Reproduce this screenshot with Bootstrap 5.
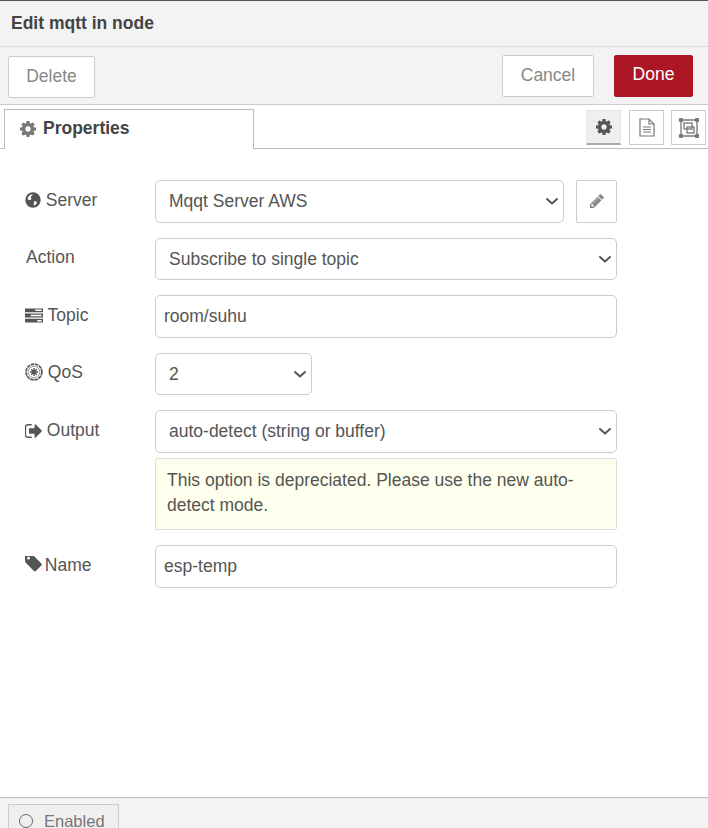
<!DOCTYPE html>
<html lang="en">
<head>
  <meta charset="UTF-8">
  <title>Edit mqtt in node</title>
  <link href="https://cdn.jsdelivr.net/npm/bootstrap@5.3.0/dist/css/bootstrap.min.css" rel="stylesheet">
  <style>
    html, body { height: 828px; overflow: hidden; }
    body { font-family: "Liberation Sans", Arial, sans-serif; font-size: 17.5px; color: #555; background: #fff; }
    .tray { height: 828px; border-top: 1px solid #555; }
    .tray-title { height: 46px; padding: 0 11px; background: #f3f3f3; border-bottom: 1px solid #ddd; color: #444; font-weight: 700; font-size: 17.5px; line-height: 44px; }
    .tray-bar { height: 58px; padding: 8px 15px 0 8px; background: #f3f3f3; border-bottom: 1px solid #ccc; }
    .tray-btn { height: 42px; font-size: 17.5px; line-height: 1; border-radius: 2px; background: #fff; border: 1px solid #ccc; color: #888; padding: 0 0 2px; }
    .btn-delete { width: 87px; margin-top: 1px; padding-bottom: 1px; }
    .btn-cancel { width: 92px; margin-right: 20px; padding-bottom: 0; }
    .btn-done { width: 79px; background: #ad1625; border-color: #ad1625; color: #fff; }
    .tab-strip { height: 44px; padding: 4px 2px 0 4px; border-bottom: 1px solid #bbb; }
    .prop-tab { width: 250px; height: 40px; background: #fff; border: 1px solid #bbb; border-bottom: 0; color: #444; font-weight: 700; padding: 0 0 2px 15px; gap: 7px; }
    .prop-tab svg { fill: #777; }
    .side-btn { width: 35px; height: 35px; margin-top: 1px; margin-left: 8px; border: 1px solid #ccc; background: #fff; }
    .side-btn:last-child { margin-left: 7px; }
    .side-btn.is-on { background: #efefef; border-color: #e6e6e6; border-bottom: 2px solid #aaa; }
    .prop-form { padding: 31px 91px 0 25px; flex: 1 1 auto; }
    .form-line { margin-bottom: 15px; min-height: 42.5px; }
    .form-line label { width: 130px; flex: none; margin-top: -1.4px; padding-top: 8px; align-self: flex-start; color: #555; }
    .form-line svg { fill: #555; vertical-align: -2px; }
    .form-line .qos-ico { fill: none; stroke: #555; vertical-align: -3px; }
    .form-line .tag-ico { margin-right: -2px; }
    .plain-label { padding-left: 1px; }
    .form-select, .form-control { height: 42.5px; font-size: 17.5px; color: #555; border-color: #ccc; border-radius: 5px; font-family: inherit; }
    .form-select { padding: 0 30px 0 13px; background-position: right 4px center; background-size: 14px 10px; background-image: url("data:image/svg+xml,%3csvg xmlns='http://www.w3.org/2000/svg' viewBox='0 0 14 10'%3e%3cpath fill='none' stroke='%23555' stroke-width='2' stroke-linecap='round' stroke-linejoin='round' d='M2 3l5 4.500 5-4.500'/%3e%3c/svg%3e"); }
    .form-control { padding: 0 8px; }
    .pencil-btn { width: 41px; height: 42.5px; margin-left: 12px; flex: none; border: 1px solid #ccc; border-radius: 2px; background: #fff; }
    .form-line .pencil-btn svg { fill: #888; }
    .qos-select { width: 157px; }
    .dep-tip { margin: 5.5px 0 0 130px; padding: 9px 11px; height: 72px; background: #ffe; border: 1px solid #ddd; border-radius: 2px; line-height: 25px; font-size: 17.5px; color: #555; }
    .tray-foot { height: 31px; padding: 6px 0 0 8px; background: #f3f3f3; border-top: 1px solid #bbb; overflow: hidden; flex: none; }
    .enable-btn { width: 111px; height: 40px; background: #efefef; border: 1px solid #ccc; color: #777; padding: 6px 0 0 10px; font-size: 16.5px; line-height: 20px; }
    .enable-dot { width: 14px; height: 14px; border: 1.5px solid #666; border-radius: 50%; margin-right: 11px; margin-top: 3px; flex: none; }
  </style>
</head>
<body>
  <div class="tray d-flex flex-column">
    <div class="tray-title">Edit mqtt in node</div>
    <div class="tray-bar d-flex">
      <button class="btn tray-btn btn-delete">Delete</button>
      <div class="ms-auto d-flex align-items-start">
        <button class="btn tray-btn btn-cancel">Cancel</button>
        <button class="btn tray-btn btn-done">Done</button>
      </div>
    </div>
    <div class="tab-strip d-flex">
      <div class="prop-tab d-flex align-items-center">
        <svg width="16" height="16" viewBox="128 128 1536 1536"><path d="M1152 896q0-106-75-181t-181-75-181 75-75 181 75 181 181 75 181-75 75-181zm512-109v222q0 12-8 23t-20 13l-185 28q-19 54-39 91 35 50 107 138 10 12 10 25t-9 23q-27 37-99 108t-94 71q-12 0-26-9l-138-108q-44 23-91 38-16 136-29 186-7 28-36 28h-222q-14 0-24.500-8.500t-11.500-21.500l-28-184q-49-16-90-37l-141 107q-10 9-25 9-14 0-25-11-126-114-165-168-7-10-7-23 0-12 8-23 15-21 51-66.500t54-70.500q-27-50-41-99l-183-27q-13-2-21-12.500t-8-23.500v-222q0-12 8-23t19-13l186-28q14-46 39-92-40-57-107-138-10-12-10-24 0-10 9-23 26-36 98.500-107.500t94.500-71.500q13 0 26 10l138 107q44-23 91-38 16-136 29-186 7-28 36-28h222q14 0 24.500 8.500t11.500 21.500l28 184q49 16 90 37l142-107q9-9 24-9 13 0 25 10 129 119 165 170 7 8 7 22 0 12-8 23-15 21-51 66.500t-54 70.500q26 50 41 98l183 28q13 2 21 12.500t8 23.500z"/></svg>
        <span>Properties</span>
      </div>
      <div class="ms-auto d-flex">
        <div class="side-btn is-on d-flex align-items-center justify-content-center">
          <svg width="16" height="16" viewBox="128 128 1536 1536" fill="#555"><path d="M1152 896q0-106-75-181t-181-75-181 75-75 181 75 181 181 75 181-75 75-181zm512-109v222q0 12-8 23t-20 13l-185 28q-19 54-39 91 35 50 107 138 10 12 10 25t-9 23q-27 37-99 108t-94 71q-12 0-26-9l-138-108q-44 23-91 38-16 136-29 186-7 28-36 28h-222q-14 0-24.500-8.500t-11.500-21.500l-28-184q-49-16-90-37l-141 107q-10 9-25 9-14 0-25-11-126-114-165-168-7-10-7-23 0-12 8-23 15-21 51-66.500t54-70.500q-27-50-41-99l-183-27q-13-2-21-12.500t-8-23.500v-222q0-12 8-23t19-13l186-28q14-46 39-92-40-57-107-138-10-12-10-24 0-10 9-23 26-36 98.500-107.500t94.500-71.500q13 0 26 10l138 107q44-23 91-38 16-136 29-186 7-28 36-28h222q14 0 24.500 8.500t11.500 21.500l28 184q49 16 90 37l142-107q9-9 24-9 13 0 25 10 129 119 165 170 7 8 7 22 0 12-8 23-15 21-51 66.500t-54 70.500q26 50 41 98l183 28q13 2 21 12.500t8 23.500z"/></svg>
        </div>
        <div class="side-btn d-flex align-items-center justify-content-center">
          <svg width="16" height="19" viewBox="0 0 16 19" fill="none" stroke="#777" stroke-width="1.200"><path d="M1 1h9l5 5v12H1z"/><path d="M10 1v5h5"/><path d="M4 9h8M4 11.500h8M4 14h8"/></svg>
        </div>
        <div class="side-btn d-flex align-items-center justify-content-center">
          <svg width="22" height="22" viewBox="0 0 22 22" fill="none" stroke="#777" stroke-width="1.300"><path d="M3 3h16v16H3z"/><rect x="6" y="6" width="8" height="6"/><rect x="9" y="10" width="7" height="6"/><g fill="#777" stroke="none"><rect x="1" y="1" width="4" height="4" rx="1"/><rect x="17" y="1" width="4" height="4" rx="1"/><rect x="1" y="17" width="4" height="4" rx="1"/><rect x="17" y="17" width="4" height="4" rx="1"/></g></svg>
        </div>
      </div>
    </div>

    <form class="prop-form">
      <div class="form-line d-flex">
        <label>
          <svg width="16" height="16" viewBox="0 0 16 16"><circle cx="8" cy="8" r="7.700"/><path d="M2.500 7C3 4.500 5 2.500 7.500 2c.5 1-1 1.500-1.500 2.500S7 6.500 6 7.500 3.500 8 2.500 7zM9 9.500c1-.5 2.500 0 3 1-.5 1.500-1.500 2.500-3 3-.8-1 .5-2.500 0-4z" fill="#fff"/></svg>
          Server
        </label>
        <select class="form-select"><option>Mqqt Server AWS</option></select>
        <button type="button" class="pencil-btn d-flex align-items-center justify-content-center p-0">
          <svg width="14" height="14" viewBox="128 128 1536 1536"><path d="M491 1536l91-91-235-235-91 91v107h128v128h107zm523-928q0-22-22-22-10 0-17 7l-542 542q-7 7-7 17 0 22 22 22 10 0 17-7l542-542q7-7 7-17zm-54-192l416 416-832 832h-416v-416zm683 96q0 53-37 90l-166 166-416-416 166-165q36-38 90-38 53 0 91 38l235 234q37 39 37 91z"/></svg>
        </button>
      </div>
      <div class="form-line d-flex">
        <label class="plain-label">Action</label>
        <select class="form-select"><option>Subscribe to single topic</option></select>
      </div>
      <div class="form-line d-flex">
        <label>
          <svg width="18" height="15" viewBox="0 0 19 15"><path d="M0 0h19v4H0zM0 5.500h19v4H0zM0 11h19v4H0z"/><path d="M11 1.200h6.500v1.600H11zM6 6.700h11.500v1.600H6zM13 12.200h4.500v1.600H13z" fill="#fff"/></svg>
          Topic
        </label>
        <input class="form-control" type="text" value="room/suhu">
      </div>
      <div class="form-line d-flex">
        <label>
          <svg class="qos-ico" width="18" height="18" viewBox="0 0 18 18"><circle cx="9" cy="9" r="7.900" stroke-width="1.700" stroke-dasharray="3.500 .7"/><circle cx="9" cy="9" r="5.800" stroke-width=".6"/><path d="M9 5v8M5 9h8M6.200 6.200l5.600 5.600M11.800 6.200l-5.600 5.600" stroke-width="1.400"/></svg>
          QoS
        </label>
        <select class="form-select qos-select"><option>2</option></select>
      </div>
      <div class="form-line">
        <div class="d-flex">
          <label>
            <svg width="17" height="14" viewBox="96 256 1536 1280"><path d="M704 1440q0 4 1 20t.5 26.500-3 23.500-10 19.500-20.500 6.500h-320q-119 0-203.500-84.500t-84.500-203.500v-704q0-119 84.500-203.500t203.500-84.500h320q13 0 22.500 9.500t9.500 22.500q0 4 1 20t.5 26.500-3 23.500-10 19.500-20.500 6.500h-320q-66 0-113 47t-47 113v704q0 66 47 113t113 47h312l11.500 1 11.500 3 8 5.500 7 9 2 13.500zm928-544q0 26-19 45l-544 544q-19 19-45 19t-45-19-19-45v-288h-448q-26 0-45-19t-19-45v-384q0-26 19-45t45-19h448v-288q0-26 19-45t45-19 45 19l544 544q19 19 19 45z"/></svg>
            Output
          </label>
          <select class="form-select"><option>auto-detect (string or buffer)</option></select>
        </div>
        <div class="dep-tip">This option is depreciated. Please use the new auto-detect mode.</div>
      </div>
      <div class="form-line d-flex">
        <label>
          <svg class="tag-ico" width="17" height="17" viewBox="128 256 1536 1536"><path d="M576 448q0-53-37.500-90.500t-90.500-37.500-90.500 37.500-37.500 90.500 37.500 90.500 90.500 37.500 90.500-37.500 37.500-90.500zm1067 576q0 53-37 90l-491 492q-39 37-91 37-53 0-90-37l-715-716q-38-37-64.500-101t-26.500-117v-416q0-52 38-90t90-38h416q53 0 117 26.500t102 64.500l715 714q37 39 37 91z"/></svg>
          Name
        </label>
        <input class="form-control" type="text" value="esp-temp">
      </div>
    </form>

    <div class="tray-foot">
      <div class="enable-btn d-flex">
        <span class="enable-dot"></span>
        <span>Enabled</span>
      </div>
    </div>
  </div>
</body>
</html>
